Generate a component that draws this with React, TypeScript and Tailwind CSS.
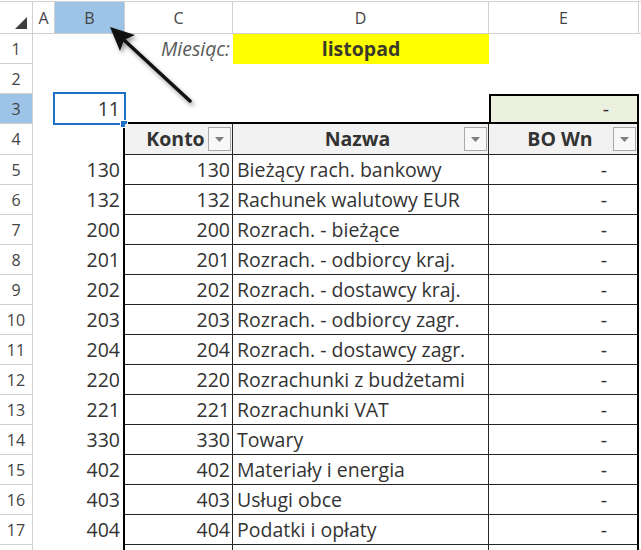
import React from 'react';

const rows: [string, string][] = [
  ['130', 'Bieżący rach. bankowy'],
  ['132', 'Rachunek walutowy EUR'],
  ['200', 'Rozrach. - bieżące'],
  ['201', 'Rozrach. - odbiorcy kraj.'],
  ['202', 'Rozrach. - dostawcy kraj.'],
  ['203', 'Rozrach. - odbiorcy zagr.'],
  ['204', 'Rozrach. - dostawcy zagr.'],
  ['220', 'Rozrachunki z budżetami'],
  ['221', 'Rozrachunki VAT'],
  ['330', 'Towary'],
  ['402', 'Materiały i energia'],
  ['403', 'Usługi obce'],
  ['404', 'Podatki i opłaty'],
];

const RowHead = ({ n, active }: { n?: number; active?: boolean }) => (
  <div
    className={`w-[33px] shrink-0 h-full border-r border-b border-[#d0d0d0] flex items-center justify-center text-[16px] text-[#444] ${
      active ? 'bg-[#9dc3e6]' : 'bg-white'
    }`}
  >
    {n}
  </div>
);

const FilterButton = () => (
  <div className="absolute right-px top-[3px] w-[23px] h-[24px] border border-[#a8a8a8] bg-[#f8f8f8] flex items-center justify-center">
    <svg width="9" height="5" viewBox="0 0 9 5">
      <polygon points="0,0 9,0 4.5,5" fill="#7f7f7f" />
    </svg>
  </div>
);

const HeadCell = ({ label, w, last }: { label: string; w: string; last?: boolean }) => (
  <div
    className={`${w} shrink-0 relative h-full bg-[#f2f2f2] border-b border-[#262626] flex items-center justify-center font-bold text-[#333] ${
      last ? 'border-r-2 border-r-black' : 'border-r'
    }`}
  >
    <span className="pr-[6px]">{label}</span>
    <FilterButton />
  </div>
);

export default function App() {
  return (
    <div className="relative w-[641px] h-[550px] overflow-hidden bg-white font-['Open_Sans',sans-serif] text-[19.5px] leading-none text-[#333]">
      {/* column headers */}
      <div className="mt-px flex h-[33px] border-t border-b border-[#d0d0d0] text-[16px] text-[#444]">
        <div className="w-[33px] shrink-0 border-r border-[#d0d0d0] relative">
          <svg className="absolute left-[15px] top-[15px]" width="12" height="12" viewBox="0 0 12 12">
            <polygon points="0,12 12,12 12,0" fill="#3f3f3f" />
          </svg>
        </div>
        <div className="w-[22px] shrink-0 border-r border-[#d0d0d0] flex items-center justify-center">A</div>
        <div className="w-[70px] shrink-0 border-r border-[#d0d0d0] bg-[#9dc3e6] flex items-center justify-center">B</div>
        <div className="w-[108px] shrink-0 border-r border-[#d0d0d0] flex items-center justify-center">C</div>
        <div className="w-[256px] shrink-0 border-r border-[#d0d0d0] flex items-center justify-center">D</div>
        <div className="w-[150px] shrink-0 border-r border-[#d0d0d0] flex items-center justify-center">E</div>
        <div className="flex-1" />
      </div>

      {/* row 1 */}
      <div className="flex h-[30px]">
        <RowHead n={1} />
        <div className="w-[22px] shrink-0" />
        <div className="w-[70px] shrink-0" />
        <div className="w-[108px] shrink-0 flex items-center justify-end pr-[3px] italic text-[#595959]">Miesiąc:</div>
        <div className="w-[256px] shrink-0 bg-[#ffff00] flex items-center justify-center font-bold text-[#3a3a2a]">listopad</div>
        <div className="flex-1" />
      </div>

      {/* row 2 */}
      <div className="flex h-[30px]">
        <RowHead n={2} />
      </div>

      {/* row 3 */}
      <div className="flex h-[30px]">
        <RowHead n={3} active />
        <div className="w-[22px] shrink-0" />
        <div className="w-[70px] shrink-0 relative flex items-center justify-end pr-[5px]">
          11
          <div className="absolute -left-[2px] -top-[2px] w-[73px] h-[33px] border-2 border-[#1f6fc6]" />
          <div className="absolute left-[65px] top-[26px] w-[8px] h-[8px] bg-[#1f6fc6] border border-white" />
        </div>
        <div className="w-[108px] shrink-0 border-b-2 border-black" />
        <div className="w-[256px] shrink-0 border-b-2 border-black" />
        <div className="w-[150px] shrink-0 border-2 border-black bg-[#ebf0df] flex items-center justify-end pr-[28px]">-</div>
        <div className="flex-1" />
      </div>

      {/* row 4 - table header */}
      <div className="flex h-[31px]">
        <RowHead n={4} />
        <div className="w-[22px] shrink-0" />
        <div className="w-[70px] shrink-0 border-r-2 border-black" />
        <HeadCell label="Konto" w="w-[108px]" />
        <HeadCell label="Nazwa" w="w-[256px]" />
        <HeadCell label="BO Wn" w="w-[150px]" last />
        <div className="flex-1" />
      </div>

      {/* table rows */}
      {rows.map(([konto, nazwa], i) => (
        <div key={konto} className="flex h-[30px]">
          <RowHead n={i + 5} />
          <div className="w-[22px] shrink-0" />
          <div className="w-[70px] shrink-0 border-r-2 border-black flex items-center justify-end pr-[3px]">{konto}</div>
          <div className="w-[108px] shrink-0 border-r border-b border-[#262626] flex items-center justify-end pr-[2px]">{konto}</div>
          <div className="w-[256px] shrink-0 border-r border-b border-[#262626] flex items-center pl-[4px] whitespace-nowrap">{nazwa}</div>
          <div className="w-[150px] shrink-0 border-b border-[#262626] border-r-2 border-r-black flex items-center justify-end pr-[30px]">-</div>
          <div className="flex-1" />
        </div>
      ))}

      {/* row 18, cut off at the bottom edge */}
      <div className="flex h-[30px]">
        <RowHead />
        <div className="w-[22px] shrink-0" />
        <div className="w-[70px] shrink-0 border-r-2 border-black" />
        <div className="w-[108px] shrink-0 border-r border-[#262626]" />
        <div className="w-[256px] shrink-0 border-r border-[#262626]" />
        <div className="w-[150px] shrink-0 border-r-2 border-black" />
      </div>

      {/* callout arrow */}
      <svg
        className="absolute left-0 top-0 pointer-events-none drop-shadow-[2px_3px_2px_rgba(0,0,0,0.4)]"
        width="641"
        height="550"
        viewBox="0 0 641 550"
      >
        <line x1="124" y1="40" x2="190" y2="101" stroke="#111" strokeWidth="3.5" strokeLinecap="round" />
        <polygon points="110,27 135,35 124,40 120,51" fill="#111" />
      </svg>
    </div>
  );
}
